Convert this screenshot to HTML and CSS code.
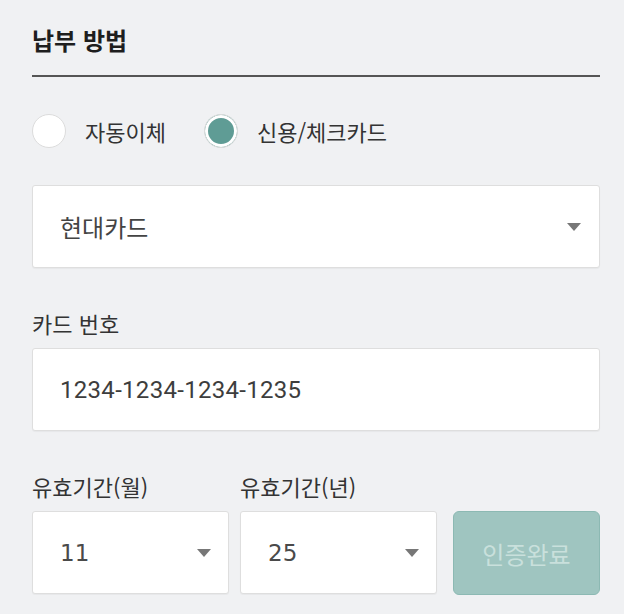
FILE: index.html
```html
<!DOCTYPE html>
<html lang="ko">
<head>
    <meta charset="UTF-8">
    <title>납부 방법</title>
    <link rel="stylesheet" href="styles.css">
</head>
<body>

<h2 class="section-title">납부 방법</h2>

<div class="radio-row">
    <label class="radio"><span class="radio-dot"></span>자동이체</label>
    <label class="radio checked"><span class="radio-dot"></span>신용/체크카드</label>
</div>

<div class="field select">
    <span class="field-text">현대카드</span>
    <svg class="arrow" width="14" height="8" viewBox="0 0 14 8"><path d="M0 0 H14 L7 8 Z" fill="#777"/></svg>
</div>

<p class="label">카드 번호</p>
<div class="field">
    <span class="field-text number">1234-1234-1234-1235</span>
</div>

<div class="expiry">
    <p class="label">유효기간(월)</p>
    <p class="label">유효기간(년)</p>
    <span></span>
    <div class="field select small">
        <span class="field-text digits">11</span>
        <svg class="arrow" width="14" height="8" viewBox="0 0 14 8"><path d="M0 0 H14 L7 8 Z" fill="#777"/></svg>
    </div>
    <div class="field select small">
        <span class="field-text digits">25</span>
        <svg class="arrow" width="14" height="8" viewBox="0 0 14 8"><path d="M0 0 H14 L7 8 Z" fill="#777"/></svg>
    </div>
    <button class="verify-btn" disabled>인증완료</button>
</div>

</body>
</html>
```

FILE: styles.css
```css
body {
    font-family: "Noto Sans CJK KR", "Noto Sans", sans-serif;
    background: #f0f1f3;
    color: #333;
    margin: 0;
    padding: 0 24px 0 32px;
}
.section-title {
    font-size: 24px;
    font-weight: 700;
    line-height: 30px;
    color: #1e1e1e;
    margin: 25px 0 0;
    padding-bottom: 20px;
    border-bottom: 2px solid #555;
}
.radio-row {
    display: flex;
    align-items: center;
    margin-top: 36px;
    height: 35px;
}
.radio {
    display: flex;
    align-items: center;
    font-size: 22px;
    color: #333;
    margin-right: 38px;
}
.radio-dot {
    width: 32px;
    height: 32px;
    border-radius: 50%;
    background: #fff;
    border: 1px solid #dcdcdc;
    margin-right: 19px;
    box-sizing: content-box;
}
.radio.checked .radio-dot {
    background: #5f9c95;
    box-shadow: inset 0 0 0 3px #fff;
}
.field {
    display: flex;
    align-items: center;
    height: 83px;
    box-sizing: border-box;
    background: #fff;
    border: 1px solid #dedede;
    border-radius: 3px;
    padding: 0 18px 0 27px;
    box-shadow: 0 1px 1px rgba(0, 0, 0, 0.04);
}
.select {
    margin-top: 37px;
    justify-content: space-between;
}
.field-text {
    font-size: 24px;
    color: #444;
}
.field-text.number {
    font-family: Roboto, "Noto Sans", sans-serif;
    font-size: 24px;
    letter-spacing: 0.3px;
    color: #3d3d3d;
}
.field-text.digits {
    font-family: "DejaVu Sans", sans-serif;
    font-size: 23px;
    color: #4a4a4a;
}
.label {
    font-size: 22px;
    line-height: 24px;
    color: #333;
    margin: 43px 0 13px;
}
.expiry {
    display: grid;
    grid-template-columns: 197px 197px 1fr;
    column-gap: 11px;
}
.select.small {
    margin-top: 0;
    padding-right: 17px;
}
.verify-btn {
    margin-left: 5px;
    height: 84px;
    background: #9fc5c0;
    border: 1px solid #8cb9b3;
    border-radius: 6px;
    color: #c9e0dc;
    font-family: inherit;
    font-size: 24px;
}
```
